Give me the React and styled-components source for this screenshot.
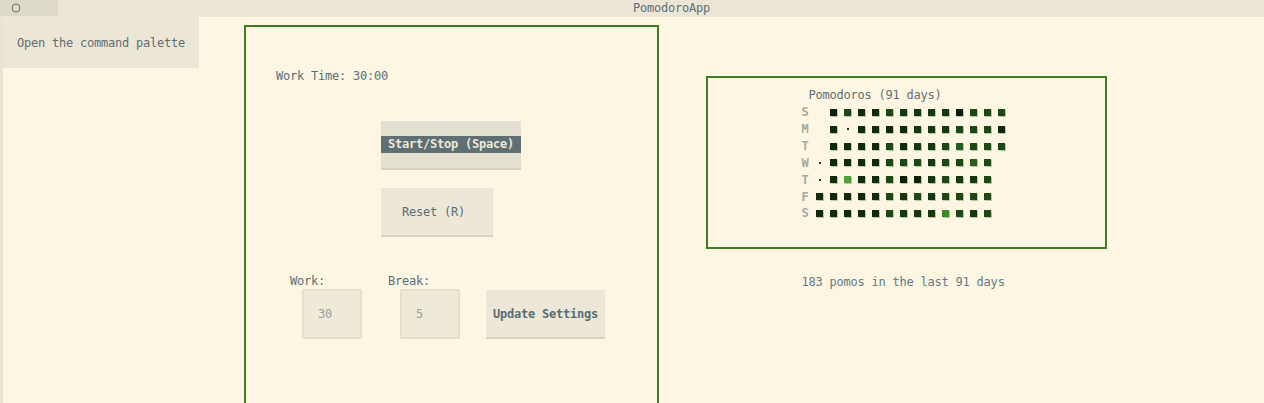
import React from 'react';
import styled, { createGlobalStyle } from 'styled-components';

const GlobalStyle = createGlobalStyle`
  html, body {
    margin: 0;
    height: 100%;
    overflow: hidden;
    background: #fdf6e3;
  }
  body {
    font-family: "DejaVu Sans Mono", "Liberation Mono", monospace;
    font-size: 12px;
    letter-spacing: -0.22px;
    line-height: 14px;
    color: #586e75;
  }
`;

const Window = styled.div`
  width: 1264px;
  height: 403px;
  display: flex;
  flex-direction: column;
  overflow: hidden;
`;

const TitleBar = styled.div`
  height: 17px;
  display: flex;
  background: #ece6d6;
  flex-shrink: 0;
`;

const TabStub = styled.div`
  width: 58px;
  height: 16px;
  background: #dedac9;
  display: flex;
  align-items: center;
  padding-left: 11px;
  box-sizing: border-box;
`;

const Title = styled.div`
  flex: 1;
  text-align: center;
  padding-left: 21px;
  line-height: 16px;
  color: #5f6f74;
`;

const Body = styled.div`
  flex: 1;
  min-height: 0;
  display: flex;
  align-items: flex-start;
  border-left: 3px solid #e9e3d3;
  overflow: hidden;
`;

const Sidebar = styled.div`
  width: 196px;
  height: 51px;
  background: #ece6d6;
  display: flex;
  align-items: center;
  padding-left: 14px;
  box-sizing: border-box;
  color: #5f6f74;
  white-space: nowrap;
`;

const Panel = styled.section`
  margin: 8px 0 0 45px;
  width: 415px;
  height: 400px;
  flex-shrink: 0;
  box-sizing: border-box;
  border: 2px solid #3c7e22;
  padding: 42px 0 0 30px;
  display: flex;
  flex-direction: column;
`;

const TimeLabel = styled.div`
  height: 14px;
`;

const Controls = styled.div`
  margin: 37px 0 0 105px;
  display: flex;
  flex-direction: column;
  align-items: flex-start;
  gap: 17px;
`;

const Button = styled.button`
  font: inherit;
  letter-spacing: inherit;
  white-space: nowrap;
  font-weight: ${(p) => (p.$light ? 'normal' : 'bold')};
  color: #586e75;
  background: ${(p) => (p.$focused ? '#e4e0d1' : '#ede7d7')};
  border: 0;
  border-top: 1px solid #fcf8ee;
  border-bottom: 2px solid #d9d3c3;
  height: ${(p) => p.$height || 50}px;
  width: ${(p) => p.$width}px;
  padding: ${(p) => (p.$focused ? '0' : `0 0 0 ${p.$pad}px`)};
  text-align: left;
  box-sizing: border-box;
  display: flex;
  align-items: center;
`;

const Selected = styled.span`
  display: block;
  width: 100%;
  white-space: nowrap;
  padding: 1px 7px 2px;
  background: #5f6f74;
  color: #ece7d7;
  line-height: 14px;
`;

const SettingsRow = styled.div`
  margin: 37px 0 0 14px;
  display: flex;
  align-items: flex-end;
  gap: 26px;
`;

const Field = styled.label`
  display: flex;
  flex-direction: column;
  gap: 1px;
`;

const Input = styled.input`
  font: inherit;
  letter-spacing: inherit;
  color: #93a1a1;
  width: 60px;
  height: 50px;
  margin-left: 12px;
  box-sizing: border-box;
  border: 2px solid #e6dfcc;
  background: #efe9d8;
  padding: 0 0 0 14px;
  outline: none;
`;

const Right = styled.div`
  margin: 59px 0 0 47px;
  display: flex;
  flex-direction: column;
  align-items: center;
  width: 401px;
`;

const HeatBox = styled.div`
  width: 401px;
  box-sizing: border-box;
  border: 2px solid #3c7e22;
  padding: 9px 0 25px;
  display: flex;
  flex-direction: column;
  align-items: center;
`;

const HeatTitle = styled.div`
  width: 210px;
  padding-left: 7px;
  box-sizing: border-box;
  line-height: 17px;
  color: #5f6f74;
`;

const Grid = styled.div`
  width: 210px;
  display: grid;
  grid-template-columns: repeat(15, 14px);
  grid-auto-rows: 16.85px;
  align-items: center;
`;

const DayLabel = styled.span`
  font-weight: bold;
  color: #a3aaa4;
  line-height: 14px;
`;

const levels = ['#0c1f07', '#112b0a', '#16380e', '#1d4713', '#285c19', '#3b8a28', '#4ca335'];

const Cell = styled.span`
  width: 7px;
  height: 7px;
  background: ${(p) => levels[p.$level]};
  box-shadow: 1px 1px 0 rgba(96, 146, 74, 0.45);
`;

const Dot = styled.span`
  width: 2px;
  height: 2px;
  margin-left: 3px;
  background: #2a2a22;
`;

const Caption = styled.div`
  width: 210px;
  margin-top: 26px;
  line-height: 14px;
  color: #657b83;
  white-space: nowrap;
`;

const rows = [
  ['S', [null, 0, 3, 1, 1, 3, 2, 2, 2, 2, 0, 3, 3, 3]],
  ['M', [null, 1, 'd', 1, 1, 1, 1, 2, 2, 2, 3, 3, 3, 1]],
  ['T', [null, 1, 1, 1, 1, 3, 1, 2, 2, 3, 4, 3, 3, 3]],
  ['W', ['d', 1, 1, 1, 1, 3, 3, 3, 2, 3, 3, 4, 3, null]],
  ['T', ['d', 1, 6, 1, 1, 3, 0, 0, 2, 3, 2, 2, 3, null]],
  ['F', [1, 1, 1, 1, 1, 3, 2, 3, 2, 3, 3, 3, 3, null]],
  ['S', [1, 1, 1, 1, 1, 3, 2, 2, 2, 5, 3, 2, 3, null]],
];

function Heatmap() {
  return (
    <HeatBox>
      <HeatTitle>Pomodoros (91 days)</HeatTitle>
      <Grid>
        {rows.map(([label, days], r) => (
          <React.Fragment key={r}>
            <DayLabel>{label}</DayLabel>
            {days.map((d, c) => {
              if (d === null) return <span key={c} />;
              if (d === 'd') return <Dot key={c} />;
              return <Cell key={c} $level={d} />;
            })}
          </React.Fragment>
        ))}
      </Grid>
    </HeatBox>
  );
}

export default function App() {
  return (
    <Window>
      <GlobalStyle />
      <TitleBar>
        <TabStub>
          <svg width="10" height="10" viewBox="0 0 10 10">
            <circle cx="5" cy="5" r="4" fill="none" stroke="#5f6f74" strokeWidth="1" />
          </svg>
        </TabStub>
        <Title>PomodoroApp</Title>
      </TitleBar>
      <Body>
        <Sidebar>Open the command palette</Sidebar>
        <Panel>
          <TimeLabel>Work Time: 30:00</TimeLabel>
          <Controls>
            <Button $focused $width={140} $height={50}>
              <Selected>Start/Stop (Space)</Selected>
            </Button>
            <Button $light $width={112} $pad={21}>Reset (R)</Button>
          </Controls>
          <SettingsRow>
            <Field>
              Work:
              <Input defaultValue="30" />
            </Field>
            <Field>
              Break:
              <Input defaultValue="5" />
            </Field>
            <Button $width={119} $pad={7}>Update Settings</Button>
          </SettingsRow>
        </Panel>
        <Right>
          <Heatmap />
          <Caption>183 pomos in the last 91 days</Caption>
        </Right>
      </Body>
    </Window>
  );
}
